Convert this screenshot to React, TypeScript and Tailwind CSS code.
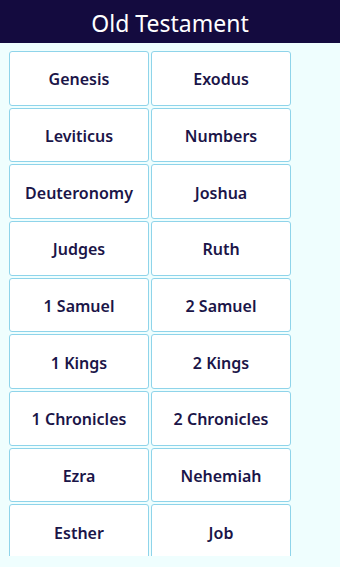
const OLD_TESTAMENT = [
  'Genesis', 'Exodus',
  'Leviticus', 'Numbers',
  'Deuteronomy', 'Joshua',
  'Judges', 'Ruth',
  '1 Samuel', '2 Samuel',
  '1 Kings', '2 Kings',
  '1 Chronicles', '2 Chronicles',
  'Ezra', 'Nehemiah',
  'Esther', 'Job',
];

export default function App() {
  return (
    <div
      className="w-[340px] h-[567px] bg-[#effefe] flex flex-col overflow-hidden"
      style={{ fontFamily: '"Noto Sans", "Open Sans", sans-serif' }}
    >
      {/* Header */}
      <div className="h-[43px] shrink-0 bg-[#140b3f] flex items-center justify-center pt-[3px]">
        <h1 className="text-white text-[23px] leading-none">Old Testament</h1>
      </div>

      {/* Book list */}
      <div className="h-[513px] overflow-hidden pt-[8px] pl-[9px]">
        <div className="grid grid-cols-[140px_140px] gap-[2px] auto-rows-[54.67px]">
          {OLD_TESTAMENT.map(book => (
            <button
              key={book}
              className="bg-white border border-[#8fd4ea] rounded-[3px] flex items-center justify-center pt-[2px] text-[#1b1548] text-[16px] font-semibold"
            >
              {book}
            </button>
          ))}
        </div>
      </div>
    </div>
  );
}
